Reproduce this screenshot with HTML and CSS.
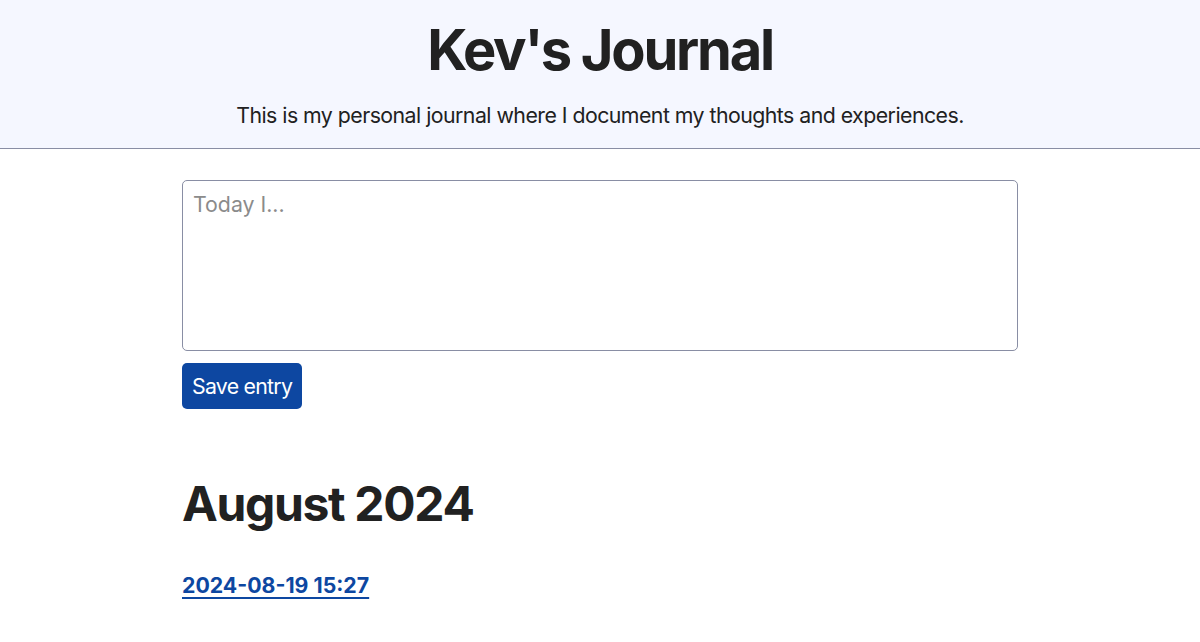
FILE: index.html
```html
<!DOCTYPE html>
<html lang="en">
<head>
	<meta charset="utf-8">
	<meta name="viewport" content="width=device-width, initial-scale=1">
	<title>Kev's Journal</title>
	<link rel="stylesheet" href="styles.css">
</head>
<body>
	<header>
		<h1>Kev's Journal</h1>
		<p>This is my personal journal where I document my thoughts and experiences.</p>
	</header>
	<main>
		<form class="entry-form">
			<textarea name="entry" placeholder="Today I..."></textarea>
			<button type="submit">Save entry</button>
		</form>
		<section class="month">
			<h2>August 2024</h2>
			<a class="entry-link" href="#">2024-08-19 15:27</a>
		</section>
	</main>
</body>
</html>
```

FILE: styles.css
```css
body {
	margin: 0;
	font-family: Inter, "Noto Sans", sans-serif;
	font-size: 21.3px;
	line-height: 1.5;
	letter-spacing: -0.025em;
	color: #212121;
	background: #fff;
}
header {
	display: flow-root;
	background-color: #f5f7ff;
	border-bottom: 1px solid #898ea4;
	text-align: center;
	padding: 0 9px 16px;
}
header h1 {
	font-size: 56px;
	line-height: 1.1;
	font-weight: 700;
	letter-spacing: -0.04em;
	margin: 20px auto 0;
}
header p {
	margin: 18px auto 0;
}
main {
	width: 836px;
	margin: 0 auto;
}
.entry-form {
	margin-top: 31px;
}
textarea {
	display: block;
	box-sizing: border-box;
	width: 100%;
	height: 171px;
	padding: 10px;
	font: inherit;
	line-height: normal;
	color: #212121;
	border: 1px solid #898ea4;
	border-radius: 5px;
	resize: none;
}
textarea::placeholder {
	color: #8b8b8b;
}
button {
	display: block;
	margin-top: 12px;
	padding: 7px 10px;
	font: inherit;
	line-height: 32px;
	letter-spacing: -0.035em;
	color: #fff;
	background-color: #0d47a1;
	border: none;
	border-radius: 5px;
}
.month h2 {
	font-size: 48px;
	line-height: 1.1;
	font-weight: 700;
	letter-spacing: -0.028em;
	margin: 69px 0 0;
}
.entry-link {
	display: inline-block;
	margin-top: 40px;
	font-weight: 700;
	letter-spacing: 0;
	color: #0d47a1;
	text-decoration-thickness: 2px;
	text-underline-offset: 4px;
}
```
